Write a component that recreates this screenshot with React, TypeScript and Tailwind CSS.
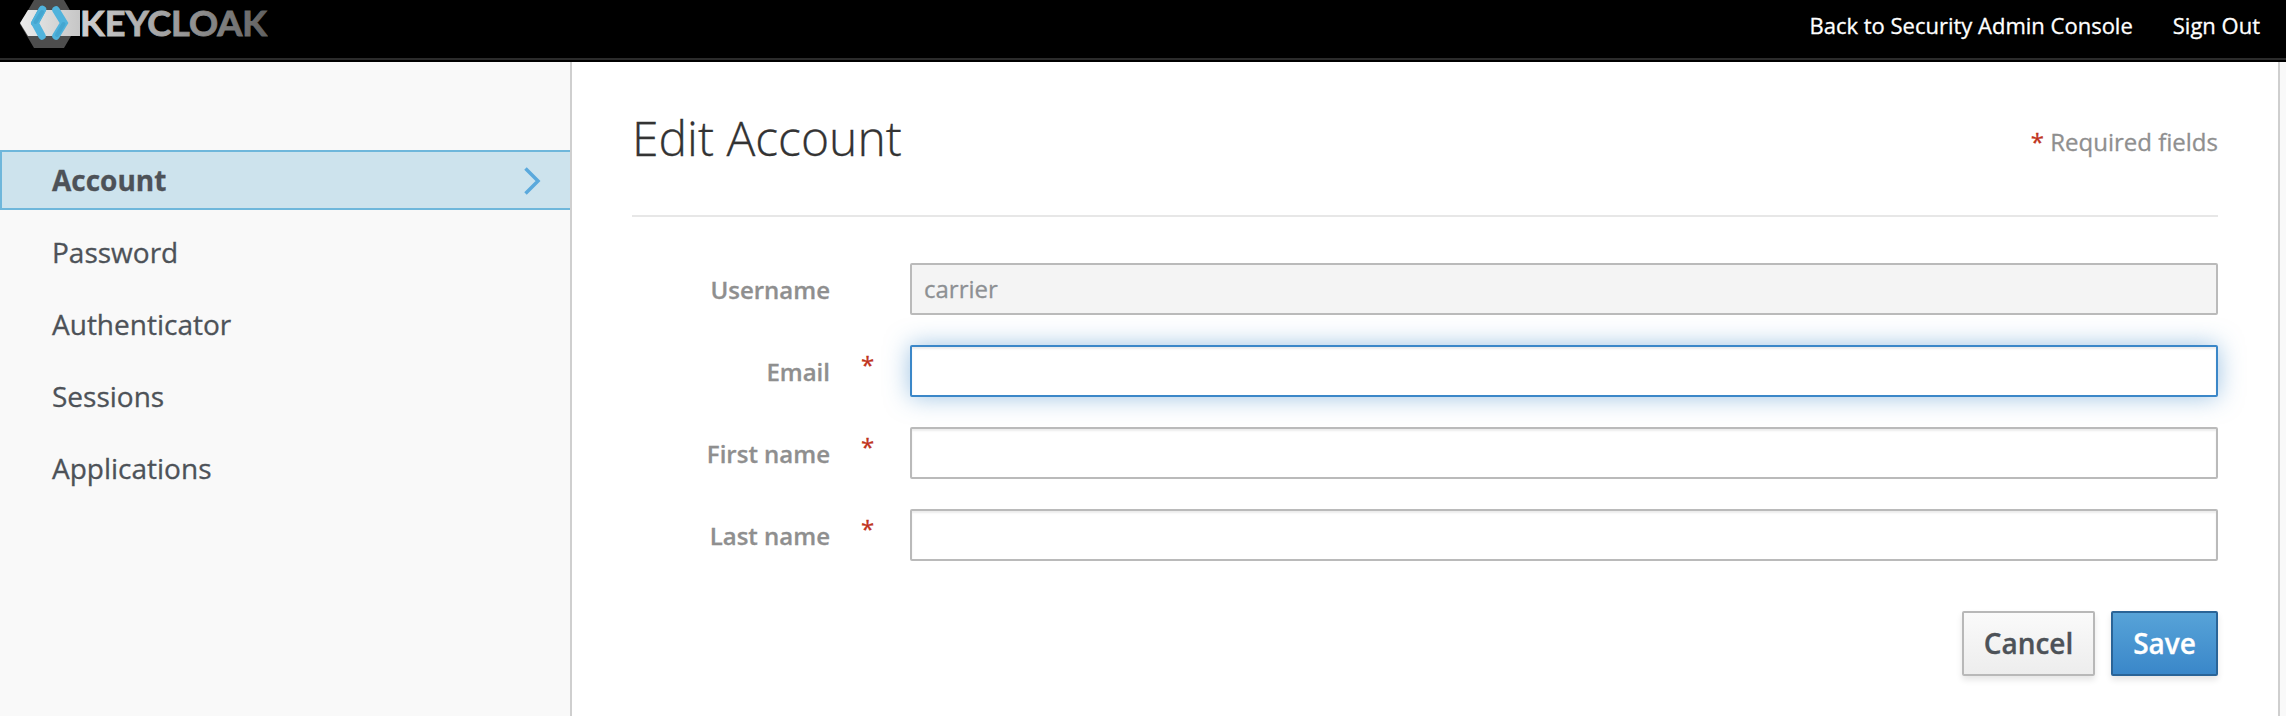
import React from "react";

function Logo() {
  return (
    <svg className="block h-[48px] w-[268px] shrink-0" width="268" height="48" viewBox="0 0 268 48" role="img" aria-label="Keycloak">
      <defs>
        <linearGradient id="plate" x1="0" x2="1" y1="0" y2="0">
          <stop offset="0" stopColor="#ececec" />
          <stop offset="1" stopColor="#c6c6c6" />
        </linearGradient>
        <linearGradient id="word" gradientUnits="userSpaceOnUse" x1="82" x2="266" y1="0" y2="0">
          <stop offset="0" stopColor="#cfcfcf" />
          <stop offset="0.5" stopColor="#9d9d9d" />
          <stop offset="1" stopColor="#626262" />
        </linearGradient>
      </defs>
      <path d="M34 0H64L78 24L64 48H34L20 24Z" fill="#4d4d4d" />
      <path d="M28 10H80V36H28L20 23Z" fill="url(#plate)" />
      <g fill="none" strokeWidth="7.500" strokeLinecap="round" strokeLinejoin="miter">
        <path d="M42 10L35 23" stroke="#3f9fc8" />
        <path d="M42.500 9.500L35 23L42 36" stroke="#50b3dc" />
        <path d="M42 12L35.500 22" stroke="#45a6d0" strokeWidth="4" />
        <path d="M56 10L64 23L56 36" stroke="#50b3dc" />
        <path d="M63.500 24L57 35" stroke="#45a6d0" strokeWidth="4" />
      </g>
      <text x="80" y="35.500" textLength="187" lengthAdjust="spacingAndGlyphs" fill="url(#word)" stroke="url(#word)" strokeWidth="0.900" className="font-['Lato'] text-[34.5px] font-bold">
        KEYCLOAK
      </text>
    </svg>
  );
}

const links = ["Password", "Authenticator", "Sessions", "Applications"];

function Field({ label, value = "", required = false, className }: { label: string; value?: string; required?: boolean; className: string }) {
  return (
    <div className="flex h-[52px]">
      <label className="w-[198px] pt-[10px] text-right text-[24px] leading-[34px] font-semibold text-[#8f8f8f]">{label}</label>
      <span className="w-[80px] pt-[3px] pl-[31px] text-[24px] leading-[34px] text-[#c0341d]">{required ? "*" : ""}</span>
      <input
        className={"h-[52px] flex-1 rounded-[2px] border-2 px-[12px] pb-[2px] text-[24px] text-[#8d9093] outline-none " + className}
        defaultValue={value}
        disabled={!required}
      />
    </div>
  );
}

export default function App() {
  return (
    <div className="flex h-[716px] w-[2286px] flex-col overflow-hidden bg-[#f9f9f9] font-['Open_Sans',sans-serif] [-webkit-text-stroke:0.3px]">
      <header className="h-[62px] shrink-0 border-b-2 border-black bg-black">
        <div className="flex h-[60px] justify-between border-b-2 border-[#2b2b2b] pr-[26px]">
          <Logo />
          <nav className="flex gap-[40px] pt-[9px] text-[22px] leading-[32px] text-white">
            <a>Back to Security Admin Console</a>
            <a>Sign Out</a>
          </nav>
        </div>
      </header>
      <div className="flex flex-1">
        <aside className="w-[570px] pt-[88px] text-[28px] leading-[40px] text-[#4d5258]">
          <a className="flex h-[60px] items-center justify-between border-2 border-r-0 border-[#6fb7db] bg-[#cde3ed] pr-[29px] pl-[50px] font-bold">
            <span>Account</span>
            <svg className="mt-[2px] h-[28px] w-[17px]" viewBox="0 0 17 28" fill="none" stroke="#5ba9dc" strokeWidth="3.500">
              <path d="M1.500 1.500L14 14L1.500 26.500" />
            </svg>
          </a>
          <nav className="flex flex-col pt-[12px]">
            {links.map((l) => (
              <a key={l} className="flex h-[72px] items-start pt-[10px] pl-[52px]">{l}</a>
            ))}
          </nav>
        </aside>
        <main className="w-[1710px] border-x-2 border-[#cfcfcf] bg-white px-[60px]">
          <div className="flex h-[155px] justify-between border-b-2 border-[#e7e7e7]">
            <h1 className="pt-[46px] text-[48px] leading-[60px] font-light text-[#333333]">Edit Account</h1>
            <p className="pt-[62px] text-[24px] leading-[36px] text-[#8f8f8f]">
              <span className="text-[#c0341d]">*</span> Required fields
            </p>
          </div>
          <form className="flex flex-col gap-[30px] pt-[46px]">
            <Field label="Username" value="carrier" className="border-[#bababa] bg-[#f4f4f4]" />
            <Field label="Email" required className="border-[#3b87c8] bg-white shadow-[inset_0_2px_2px_rgba(0,0,0,0.075),0_0_24px_rgba(59,135,200,0.5)]" />
            <Field label="First name" required className="border-[#bababa] bg-white shadow-[inset_0_2px_2px_rgba(0,0,0,0.075)]" />
            <Field label="Last name" required className="border-[#bababa] bg-white shadow-[inset_0_2px_2px_rgba(0,0,0,0.075)]" />
          </form>
          <div className="flex justify-end gap-[16px] pt-[50px] text-[28px] leading-[40px] font-semibold">
            <button type="button" className="h-[65px] w-[133px] rounded-[2px] border-2 border-[#b8b8b8] bg-linear-to-b from-[#fafafa] to-[#ededed] pb-[1px] text-[#4d5258] shadow-[0_4px_6px_rgba(0,0,0,0.1)]">
              Cancel
            </button>
            <button type="button" className="h-[65px] w-[107px] rounded-[2px] border-2 border-[#2a6497] bg-linear-to-b from-[#57a3d8] to-[#3a87c9] pb-[1px] text-white shadow-[0_4px_6px_rgba(0,0,0,0.1)]">
              Save
            </button>
          </div>
        </main>
      </div>
    </div>
  );
}
